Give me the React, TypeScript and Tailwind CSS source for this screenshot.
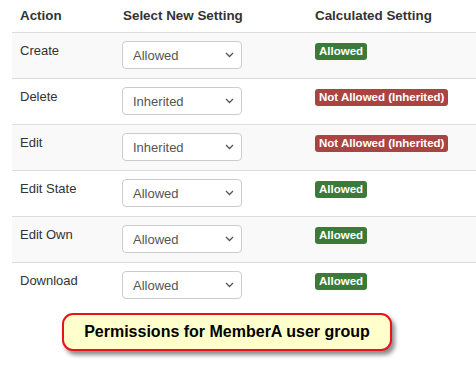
import React from "react";

type Row = { action: string; setting: string; allowed: boolean };

const rows: Row[] = [
  { action: "Create", setting: "Allowed", allowed: true },
  { action: "Delete", setting: "Inherited", allowed: false },
  { action: "Edit", setting: "Inherited", allowed: false },
  { action: "Edit State", setting: "Allowed", allowed: true },
  { action: "Edit Own", setting: "Allowed", allowed: true },
  { action: "Download", setting: "Allowed", allowed: true },
];

function Chevron() {
  return (
    <svg width="9" height="6" viewBox="0 0 9 6" className="shrink-0">
      <path d="M1 1 L4.5 4.5 L8 1" fill="none" stroke="#555" strokeWidth="1.3" />
    </svg>
  );
}

function FakeSelect({ value }: { value: string }) {
  return (
    <div className="flex items-center justify-between w-[120px] h-[28px] border border-[#ccc] rounded-[4px] bg-white pl-[10px] pr-[7px] text-[13px] text-[#555]">
      <span className="mt-[1px]">{value}</span>
      <Chevron />
    </div>
  );
}

function Badge({ allowed }: { allowed: boolean }) {
  return allowed ? (
    <span className="inline-block rounded-[3px] bg-[#3b7a3b] px-[4px] text-[11.5px] leading-[17px] font-bold text-white">
      Allowed
    </span>
  ) : (
    <span className="inline-block rounded-[3px] bg-[#a94442] px-[4px] text-[11.5px] leading-[17px] font-bold text-white">
      Not Allowed (Inherited)
    </span>
  );
}

export default function App() {
  return (
    <div className="w-[476px] h-[382px] bg-white overflow-hidden font-['Liberation_Sans',Arial,sans-serif] text-[#333]">
      <div className="ml-[12px]">
        <div className="flex h-[33px] border-b border-[#ddd] items-center text-[13.4px] font-bold">
          <div className="w-[103px] pl-[8px]">Action</div>
          <div className="w-[192px] pl-[8px]">Select New Setting</div>
          <div className="pl-[8px]">Calculated Setting</div>
        </div>
        {rows.map((r, i) => (
          <div
            key={r.action}
            className={
              "flex h-[46px] pt-[8px] text-[13px] " +
              (i % 2 === 0 ? "bg-[#f9f9f9] " : "bg-white ") +
              (i < rows.length - 1 ? "border-b border-[#ddd]" : "")
            }
          >
            <div className="w-[103px] pl-[8px] pt-[1px] leading-[18px]">{r.action}</div>
            <div className="w-[192px] pl-[7px]">
              <FakeSelect value={r.setting} />
            </div>
            <div className="pl-[8px] pt-[1px] leading-[17px]">
              <Badge allowed={r.allowed} />
            </div>
          </div>
        ))}
      </div>
      <div className="ml-[62px] mt-[4px] w-[330px] h-[38px] flex items-center justify-center rounded-[11px] border-2 border-[#e8141c] bg-[#ffffcc] shadow-[3px_4px_4px_rgba(0,0,0,0.45)] text-[16px] font-bold text-black">
        Permissions for MemberA user group
      </div>
    </div>
  );
}
